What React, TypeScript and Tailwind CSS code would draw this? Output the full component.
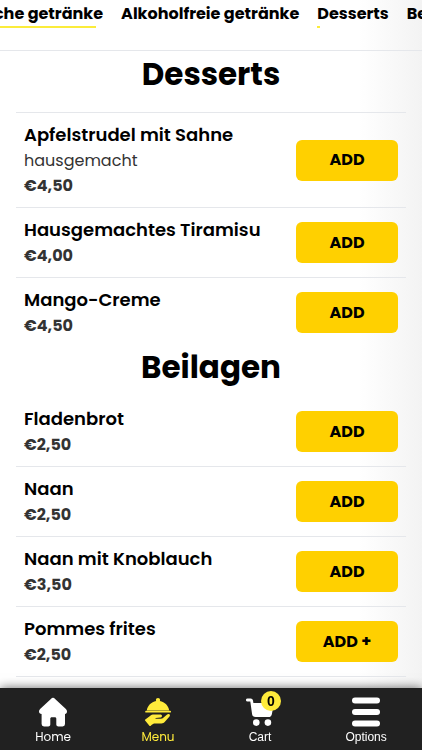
import React, { useLayoutEffect, useRef, useState } from 'react';

interface Dish {
  id: string;
  name: string;
  description?: string;
  price: number;
  hasOptions?: boolean;
}

interface Category {
  id: string;
  name: string;
  dishes: Dish[];
}

const categories: Category[] = [
  {
    id: 'desserts',
    name: 'Desserts',
    dishes: [
      { id: '1', name: 'Apfelstrudel mit Sahne', description: 'hausgemacht', price: 4.5 },
      { id: '2', name: 'Hausgemachtes Tiramisu', price: 4 },
      { id: '3', name: 'Mango-Creme', price: 4.5 },
    ],
  },
  {
    id: 'beilagen',
    name: 'Beilagen',
    dishes: [
      { id: '4', name: 'Fladenbrot', price: 2.5 },
      { id: '5', name: 'Naan', price: 2.5 },
      { id: '6', name: 'Naan mit Knoblauch', price: 3.5 },
      { id: '7', name: 'Pommes frites', price: 2.5, hasOptions: true },
    ],
  },
];

// progress is how far the underline has been drawn, in percent
const tabs = [
  { id: 'alkoholische', label: 'Alkoholische getränke', progress: 96 },
  { id: 'alkoholfreie', label: 'Alkoholfreie getränke', progress: 0 },
  { id: 'desserts', label: 'Desserts', progress: 4 },
  { id: 'beilagen', label: 'Beilagen', progress: 0 },
];

const formatPrice = (price: number) => `€${price.toFixed(2).replace('.', ',')}`;

const HomeIcon = () => (
  <svg viewBox="0 0 28 28" className="size-7 overflow-visible" fill="currentColor" aria-hidden="true">
    <path d="M11.9.9a3 3 0 0 1 4.2 0l10.8 10.2c.8.7 1.100 1.500 1.100 2.400 0 1.400-.8 2.300-2 2.500V26a2.400 2.400 0 0 1-2.400 2.400h-4.100A2.200 2.200 0 0 1 17.300 26v-5.300c0-.8-.6-1.400-1.400-1.400h-3.200c-.8 0-1.400.6-1.400 1.400V26a2.200 2.200 0 0 1-2.200 2.400H5A2.400 2.400 0 0 1 2.600 26V16C1 15.900 0 14.800 0 13.500c0-.9.3-1.700 1.100-2.400z" />
  </svg>
);

const MenuIcon = () => (
  <svg viewBox="0 0 28 28" className="size-7" fill="currentColor" aria-hidden="true">
    <path d="M14 0c1.300 0 2.100.9 2.100 2 0 .4-.1.700-.3 1 5 .9 8.800 4.800 9.400 9.500H2.800C3.400 7.800 7.200 3.900 12.200 3c-.2-.3-.3-.6-.3-1 0-1.100.8-2 2.100-2z" />
    <rect x="1.200" y="12.700" width="25.800" height="1.900" rx=".9" />
    <path d="M1.300 21.600 6 17.900c1.200-1 2.400-1.400 3.900-1.400h6.300c1.100 0 1.800.6 1.800 1.400 0 .9-.7 1.500-1.700 1.600l-4.500.5c-.5.1-.5.8 0 .8h4.800c1.200 0 2.200-.4 3-1.200l3.500-3.100c.8-.7 1.700-.8 2.300-.3.7.6.7 1.500.1 2.300l-4.600 5.300c-1 1.100-2 1.600-3.500 1.600H11c-1.200 0-2 .4-2.900 1.200l-1.600 1.400c-.3.3-.7.2-.9-.1l-4.500-5.500c-.3-.3-.2-.6.200-.8z" />
  </svg>
);

const CartIcon = () => (
  <svg viewBox="0 0 28 28" className="size-7" fill="currentColor" aria-hidden="true">
    <path d="M1.500.4h3.100c1.300 0 2.100.7 2.400 2l.4 2.500h18.900c1 0 1.600.8 1.400 1.700l-1.800 9.300c-.3 2-1.400 3.200-3.400 3.200H9.600c-2.200 0-3.200-1-3.500-2.800L4.300 3.500H1.500a1.500 1.500 0 0 1 0-3.100z" />
    <circle cx="10.300" cy="24.600" r="3.300" />
    <circle cx="21.900" cy="24.600" r="3.300" />
  </svg>
);

const OptionsIcon = () => (
  <svg viewBox="0 0 28 28" className="size-7 overflow-visible" fill="currentColor" aria-hidden="true">
    <rect y="-.5" width="28" height="6" rx="3" />
    <rect y="11" width="28" height="6" rx="3" />
    <rect y="22.500" width="28" height="6" rx="3" />
  </svg>
);

const DishRow: React.FC<{ dish: Dish }> = ({ dish }) => (
  <li className="flex items-center justify-between border-b border-gray-200 px-2">
    <div className="py-[9px]">
      <h3 className="text-[18px] leading-[26px] font-semibold">{dish.name}</h3>
      {dish.description && <p className="text-base leading-[25px] text-[#333]">{dish.description}</p>}
      <p className="text-base leading-[25px] font-bold text-[#333]">{formatPrice(dish.price)}</p>
    </div>
    <button type="button" className="h-[41px] w-[102px] shrink-0 rounded-md bg-[#ffd000] text-base font-bold">
      {dish.hasOptions ? 'ADD +' : 'ADD'}
    </button>
  </li>
);

const App: React.FC = () => {
  const [cartCount] = useState(0);
  const tabBar = useRef<HTMLElement>(null);

  // keep the end of the first tab in view
  useLayoutEffect(() => {
    const bar = tabBar.current;
    const second = bar?.children[1] as HTMLElement | undefined;
    if (bar && second) bar.scrollLeft = second.offsetLeft - 121;
  }, []);

  return (
    <div className="min-h-screen bg-linear-to-r from-white from-85% to-[#f3f3f3] pb-16 font-[Poppins,Inter,sans-serif] text-black">
      <nav
        ref={tabBar}
        className="relative flex h-[51px] gap-[18px] overflow-x-auto border-b border-gray-200 px-4 [scrollbar-width:none]"
      >
        {tabs.map((tab) => (
          <a key={tab.id} href={`#${tab.id}`} className="shrink-0 pt-0.5 text-base leading-6 font-bold whitespace-nowrap">
            {tab.label}
            <span className="block h-0.5 bg-[#fbec3b]" style={{ width: `${tab.progress}%` }} />
          </a>
        ))}
      </nav>

      <main className="px-4">
        {categories.map((category, index) => (
          <section key={category.id} id={category.id}>
            <h2
              className={
                index === 0
                  ? 'border-b border-gray-200 pt-1 pb-[19px] text-center text-[31px] leading-[38px] font-bold'
                  : 'pb-[11px] text-center text-[31px] leading-[38px] font-bold'
              }
            >
              {category.name}
            </h2>
            <ul className={index === 0 ? '[&>li:last-child]:border-transparent' : ''}>
              {category.dishes.map((dish) => (
                <DishRow key={dish.id} dish={dish} />
              ))}
            </ul>
          </section>
        ))}
      </main>

      <footer className="fixed inset-x-0 bottom-0 flex h-[62px] justify-around bg-[#212121] pt-[10px] text-xs text-white shadow-[0_0_10px_rgba(0,0,0,0.6)]">
        <a href="#home" className="flex flex-col items-center gap-[3px]">
          <HomeIcon />
          Home
        </a>
        <a href="#menu" className="flex flex-col items-center gap-[3px] text-[#ffeb3b]">
          <MenuIcon />
          Menu
        </a>
        <a href="#cart" className="relative flex min-w-[30px] flex-col items-center gap-[3px] font-['Liberation_Sans',sans-serif]">
          <CartIcon />
          Cart
          <span className="absolute -top-[7px] left-4 flex size-5 items-center justify-center rounded-full bg-[#ffeb3b] text-sm font-bold text-black">
            {cartCount}
          </span>
        </a>
        <button type="button" className="flex flex-col items-center gap-[3px] font-['Liberation_Sans',sans-serif]">
          <OptionsIcon />
          Options
        </button>
      </footer>
    </div>
  );
};

export default App;
